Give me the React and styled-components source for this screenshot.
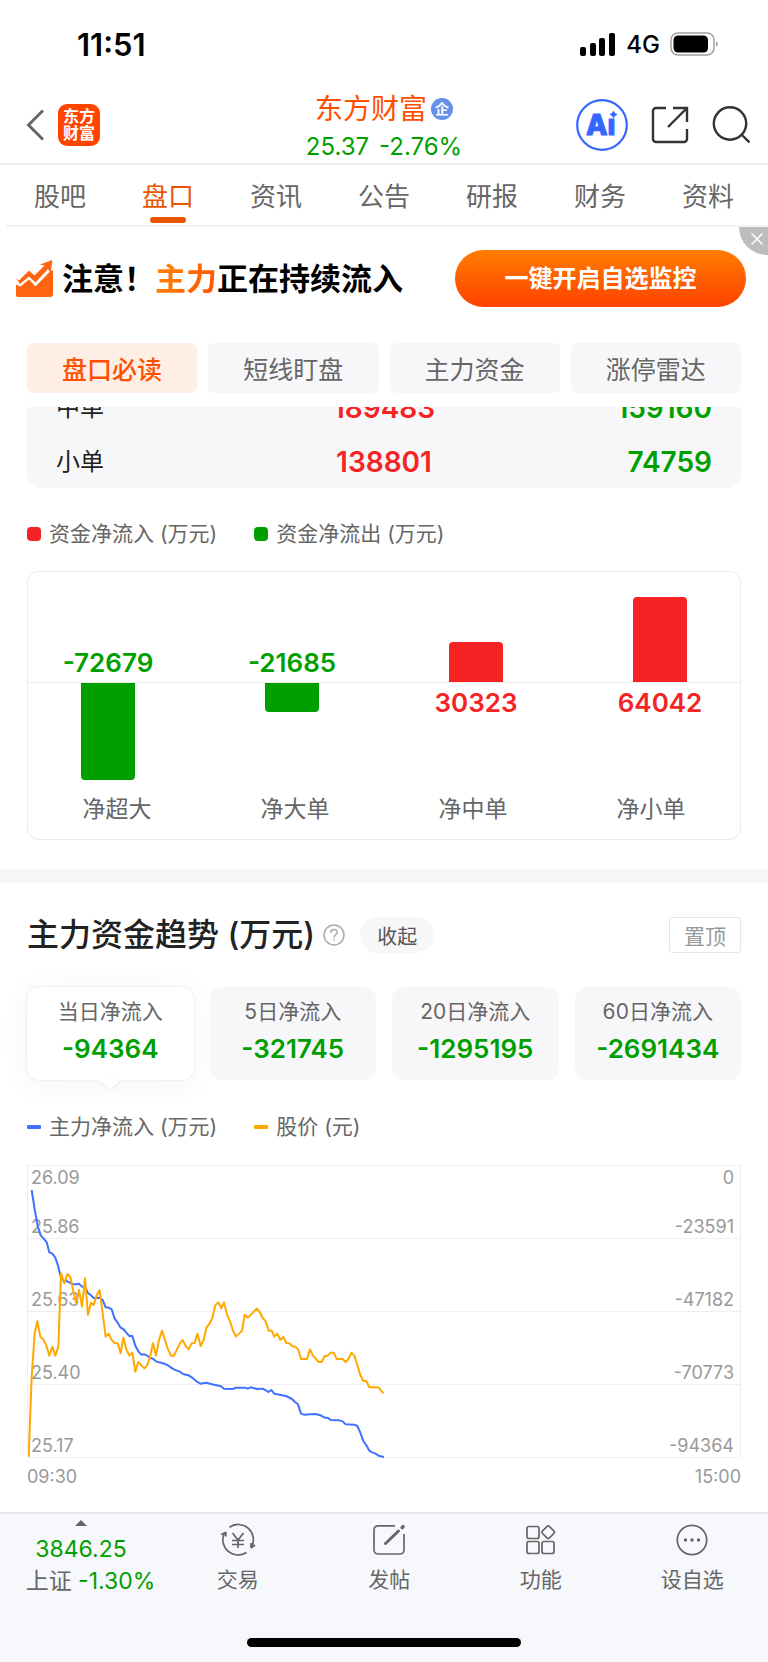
import React from "react";
import styled, { createGlobalStyle, css } from "styled-components";

const RED = "#f52323";
const GREEN = "#009f00";
const ORANGE = "#ff5000";
const GREY = "#666";
const PANEL = "#f7f7fa";

const GlobalStyle = createGlobalStyle`
  *, *::before, *::after { box-sizing: border-box; }
  body {
    margin: 0;
    background: #fff;
    color: #222;
    font-family: Inter, "Noto Sans CJK SC", sans-serif;
    font-weight: 400;
  }
  button {
    font: inherit;
    color: inherit;
    border: 0;
    padding: 0;
    margin: 0;
    background: none;
    cursor: pointer;
    white-space: nowrap;
  }
  a { color: inherit; text-decoration: none; white-space: nowrap; }
  svg { display: block; }
`;

/* ---------- status bar ---------- */
const StatusBar = styled.div`
  display: flex;
  align-items: center;
  justify-content: space-between;
  height: 86px;
  padding: 2px 49px 0 77px;
  color: #000;
`;
const Clock = styled.span`
  font-size: 31px;
  font-weight: 600;
`;
const StatusIcons = styled.div`
  display: flex;
  align-items: center;
  gap: 10px;
  font-size: 24px;
  font-weight: 500;
`;

/* ---------- header ---------- */
const Header = styled.header`
  display: grid;
  grid-template-columns: 1fr auto 1fr;
  align-items: center;
  height: 79px;
  padding: 0 18px;
  border-bottom: 2px solid #ededed;
`;
const HeaderSide = styled.div`
  display: flex;
  align-items: center;
  gap: ${(p) => p.$gap}px;
  justify-content: ${(p) => (p.$end ? "flex-end" : "flex-start")};
  padding-left: 8px;
`;
const AppLogo = styled.span`
  width: 42px;
  height: 42px;
  border-radius: 9px;
  background: #ff4400;
  color: #fff;
  font-size: 16px;
  line-height: 17px;
  font-weight: 700;
  text-align: center;
  padding-top: 4px;
`;
const StockTitle = styled.div`
  display: flex;
  flex-direction: column;
  align-items: center;
  padding-top: 2px;
`;
const StockName = styled.h1`
  display: flex;
  align-items: center;
  gap: 4px;
  margin: 0;
  color: ${ORANGE};
  font-size: 28px;
  line-height: 42px;
  font-weight: 400;
`;
const Badge = styled.span`
  width: 22px;
  height: 22px;
  border-radius: 50%;
  background: #6590ea;
  color: #fff;
  font-size: 14px;
  line-height: 21px;
  font-weight: 700;
  text-align: center;
`;
const StockPrice = styled.div`
  display: flex;
  gap: 10px;
  color: ${GREEN};
  font-size: 24px;
  line-height: 34px;
`;

/* ---------- tabs ---------- */
const Tabs = styled.nav`
  display: flex;
  height: 62px;
  margin-left: 6px;
  padding-right: 6px;
  border-bottom: 2px solid #f2f2f2;
`;
const Tab = styled.a`
  flex: 1;
  display: flex;
  flex-direction: column;
  align-items: center;
  justify-content: space-between;
  padding: 13px 0 2px;
  font-size: 26px;
  line-height: 38px;
  color: ${(p) => (p.$active ? "#ea5504" : GREY)};
  &::after {
    content: "";
    width: 36px;
    height: 6px;
    border-radius: 3px;
    background: ${(p) => (p.$active ? "#ea5504" : "transparent")};
  }
`;

/* ---------- promo banner ---------- */
const Banner = styled.section`
  position: relative;
  display: flex;
  align-items: center;
  gap: 9px;
  height: 102px;
  padding: 0 22px 0 16px;
`;
const BannerText = styled.p`
  flex: 1;
  margin: 0;
  padding-top: 2px;
  color: #000;
  font-size: 31px;
  line-height: 44px;
  font-weight: 700;
  white-space: nowrap;
`;
const Highlight = styled.span`
  background: linear-gradient(120deg, #ff8a00, #ff5000);
  background-clip: text;
  color: transparent;
`;
const BannerButton = styled.button`
  width: 291px;
  height: 57px;
  padding-bottom: 3px;
  border-radius: 29px;
  background: linear-gradient(180deg, #ff7d00, #ff4200);
  color: #fff;
  font-size: 24px;
  font-weight: 700;
`;
const CloseButton = styled.button`
  position: absolute;
  top: 0;
  right: 0;
  width: 29px;
  height: 28px;
  border-bottom-left-radius: 29px;
  background: #bdbdbd;
  display: flex;
  align-items: center;
  justify-content: center;
  padding: 0 0 5px 7px;
`;

/* ---------- content ---------- */
const Block = styled.section`
  padding: 0 27px;
`;
const Chips = styled.div`
  display: grid;
  grid-template-columns: repeat(4, 1fr);
  gap: 11px;
  padding: 14px 0;
`;
const Chip = styled.button`
  height: 50px;
  border-radius: 6px;
  font-size: 25px;
  background: ${PANEL};
  color: ${GREY};
  ${(p) =>
    p.$active &&
    css`
      background: #ffeee5;
      color: ${ORANGE};
      font-weight: 500;
    `}
`;
const TableClip = styled.div`
  display: flex;
  align-items: flex-end;
  height: 81px;
  overflow: hidden;
  border-radius: 0 0 14px 14px;
  background: ${PANEL};
`;
const OrderTable = styled.table`
  width: 100%;
  table-layout: fixed;
  border-collapse: collapse;
`;
const OrderRow = styled.tr`
  height: 54px;
`;
const OrderName = styled.th`
  padding: 2px 0 0 29px;
  font-size: 24px;
  line-height: 36px;
  font-weight: 400;
  text-align: left;
`;
const OrderValue = styled.td`
  padding: 2px ${(p) => (p.$out ? 29 : 0)}px 0 0;
  color: ${(p) => (p.$out ? GREEN : RED)};
  font-size: 28px;
  line-height: 36px;
  font-weight: 600;
  text-align: ${(p) => (p.$out ? "right" : "center")};
`;

const Legend = styled.ul`
  display: flex;
  gap: 37px;
  margin: 0;
  padding: ${(p) => (p.$line ? "32px 0 23px" : "31px 0 22px")};
  list-style: none;
  color: ${GREY};
  font-size: 21px;
  line-height: 30px;
`;
const LegendItem = styled.li`
  display: flex;
  align-items: center;
  gap: 8px;
  white-space: nowrap;
  &::before {
    content: "";
    width: 14px;
    height: ${(p) => (p.$line ? 4 : 14)}px;
    border-radius: ${(p) => (p.$line ? 1 : 4)}px;
    background: ${(p) => p.$color};
  }
`;

/* ---------- bar chart ---------- */
const BarCard = styled.div`
  border: 1px solid #ebebeb;
  border-radius: 12px;
`;
const BarHalf = styled.div`
  display: flex;
  justify-content: space-between;
  align-items: ${(p) => (p.$top ? "flex-end" : "flex-start")};
  height: ${(p) => (p.$top ? 111 : 109)}px;
  padding: 0 53px;
  ${(p) =>
    p.$top &&
    css`
      border-bottom: 1px solid #ebebeb;
    `}
`;
const BarCell = styled.div`
  display: flex;
  justify-content: center;
  width: 54px;
`;
const Bar = styled.div`
  width: 54px;
  background: ${(p) => (p.$up ? RED : GREEN)};
  border-radius: ${(p) => (p.$up ? "4px 4px 0 0" : "0 0 4px 4px")};
`;
const BarValue = styled.span`
  color: ${(p) => (p.$up ? RED : GREEN)};
  font-size: 26px;
  line-height: 39px;
  font-weight: 600;
`;
const BarNames = styled.div`
  display: grid;
  grid-template-columns: repeat(4, 1fr);
  padding-bottom: 13px;
  color: ${GREY};
  font-size: 23px;
  line-height: 34px;
  text-align: center;
`;
const Divider = styled.div`
  height: 14px;
  margin-top: 29px;
  background: ${PANEL};
`;

/* ---------- trend ---------- */
const TrendHead = styled.div`
  display: flex;
  align-items: center;
  padding: 30px 0;
`;
const TrendTitle = styled.h2`
  margin: 0;
  font-size: 32px;
  line-height: 44px;
  font-weight: 500;
  white-space: nowrap;
`;
const HelpButton = styled.button`
  margin: 0 15px 0 8px;
`;
const Pill = styled.button`
  width: 74px;
  height: 36px;
  border-radius: 18px;
  background: ${PANEL};
  color: #555;
  font-size: 20px;
`;
const PinButton = styled.button`
  width: 72px;
  height: 36px;
  margin-left: auto;
  border: 1px solid #e6e6e6;
  border-radius: 3px;
  color: #999;
  font-size: 21px;
`;
const FlowCards = styled.div`
  display: grid;
  grid-template-columns: repeat(4, 1fr);
  gap: 16px;
`;
const FlowCard = styled.button`
  position: relative;
  display: flex;
  flex-direction: column;
  align-items: center;
  height: 93px;
  padding-top: 8px;
  border-radius: 12px;
  background: ${PANEL};
  ${(p) =>
    p.$active &&
    css`
      background: #fff;
      box-shadow: 0 0 2px rgba(0, 0, 0, 0.12), 0 4px 30px rgba(0, 0, 0, 0.05);
      &::after {
        content: "";
        position: absolute;
        top: 100%;
        left: 50%;
        margin-left: -11px;
        border: 11px solid transparent;
        border-top: 9px solid #fff;
        border-bottom: 0;
        filter: drop-shadow(0 1px 1px rgba(0, 0, 0, 0.08));
      }
    `}
`;
const FlowLabel = styled.span`
  color: ${GREY};
  font-size: 21px;
  line-height: 33px;
`;
const FlowValue = styled.span`
  color: ${GREEN};
  font-size: 26px;
  line-height: 41px;
  font-weight: 600;
`;
const LineChart = styled.div`
  position: relative;
  border: 1px solid #efefef;
  border-bottom: 0;
  color: #999;
  font-size: 18px;
  line-height: 22px;
`;
const ChartBand = styled.div`
  display: flex;
  flex-direction: column;
  justify-content: space-between;
  height: 73px;
  padding: 1px 6px 0 3px;
  border-bottom: 1px solid #efefef;
  &:not(:first-child) {
    justify-content: flex-end;
  }
`;
const ScalePair = styled.div`
  display: flex;
  justify-content: space-between;
`;
const Plot = styled.svg`
  position: absolute;
  inset: 0;
  width: 100%;
  height: 100%;
`;
const Series = styled.polyline`
  fill: none;
  stroke-width: 2px;
  stroke-linejoin: round;
  vector-effect: non-scaling-stroke;
`;
const TimeAxis = styled.div`
  display: flex;
  justify-content: space-between;
  padding: 8px 0 24px;
  color: #999;
  font-size: 18px;
  line-height: 22px;
`;

/* ---------- bottom bar ---------- */
const Footer = styled.footer`
  border-top: 2px solid #e4e5e7;
  background: #f7f8fb;
`;
const ActionRow = styled.div`
  display: flex;
  height: 124px;
`;
const IndexButton = styled.button`
  width: 162px;
  display: flex;
  flex-direction: column;
  align-items: center;
  padding-top: 6px;
  color: ${GREEN};
  font-size: 23px;
  line-height: 32px;
`;
const IndexValue = styled.span`
  padding-top: 7px;
`;
const IndexChange = styled.span`
  padding-left: 19px;
`;
const IndexName = styled.span`
  color: ${GREY};
`;
const Action = styled.button`
  flex: 1;
  display: flex;
  flex-direction: column;
  align-items: center;
  gap: 7px;
  padding-top: 9px;
  color: ${GREY};
  font-size: 21px;
  line-height: 31px;
`;
const HomeIndicator = styled.div`
  width: 274px;
  height: 9px;
  margin: 0 auto;
  border-radius: 5px;
  background: #000;
`;
const HomeArea = styled.div`
  height: 24px;
`;

/* ---------- icons ---------- */
const SignalIcon = () => (
  <svg width="36" height="23" viewBox="0 0 36 23" fill="#000" aria-hidden="true">
    <rect x="0" y="14" width="6" height="9" rx="2" />
    <rect x="10" y="10" width="6" height="13" rx="2" />
    <rect x="19" y="5" width="6" height="18" rx="2" />
    <rect x="29" y="0" width="6" height="23" rx="2" />
  </svg>
);
const BatteryIcon = () => (
  <svg width="49" height="24" viewBox="0 0 49 24" aria-hidden="true">
    <rect x="1" y="1" width="43" height="22" rx="7" fill="none" stroke="#a0a0a0" strokeWidth="1.5" />
    <rect x="3.500" y="3.500" width="34.500" height="17" rx="4.500" fill="#000" />
    <path d="M46 9.500c2.500 1 2.500 4 0 5z" fill="#a0a0a0" />
  </svg>
);
const BackIcon = () => (
  <svg width="18" height="32" viewBox="0 0 18 32" fill="none" stroke="#666" strokeWidth="3" aria-hidden="true">
    <path d="M17 1.500 2.500 16 17 30.500" />
  </svg>
);
const AiIcon = () => (
  <svg width="52" height="52" viewBox="0 0 52 52" fill="#3565ff" aria-hidden="true">
    <circle cx="26" cy="26" r="24.800" fill="none" stroke="#3565ff" strokeWidth="2.200" />
    <text x="10" y="36" fontFamily="Inter, sans-serif" fontSize="28" fontWeight="800" stroke="#3565ff" strokeWidth="1" strokeLinejoin="round">Aı</text>
    <path d="M37.500 11.500q1 3 4 4-3 1-4 4-1-3-4-4 3-1 4-4z" />
  </svg>
);
const ShareIcon = () => (
  <svg width="38" height="38" viewBox="0 0 38 38" fill="none" stroke="#333" strokeWidth="2.400" aria-hidden="true">
    <path d="M15 2H5a3 3 0 0 0-3 3v28a3 3 0 0 0 3 3h28a3 3 0 0 0 3-3V23" />
    <path d="M22 2h14v14M35.500 2.500 17 21" />
  </svg>
);
const SearchIcon = () => (
  <svg width="38" height="38" viewBox="0 0 38 38" fill="none" stroke="#333" strokeWidth="2.400" aria-hidden="true">
    <circle cx="18" cy="17.500" r="16.200" />
    <path d="m29 28 8.500 8.500" />
  </svg>
);
const TrendIcon = () => (
  <svg width="37" height="37" viewBox="0 0 37 37" fill="#ff6410" aria-hidden="true">
    <path d="M0 18 3 20.500 13 10.500 18.500 15.500 28.500 5.500 24 4.500 36.500 0 34.500 13 32 9 19.500 22.500 13 16.500 4 24z" />
    <path d="M0 24.500 4.500 26.500 13 19.500 19.500 26.500 35 10.500h2V34a3 3 0 0 1-3 3H2a2 2 0 0 1-2-2z" />
  </svg>
);
const CloseIcon = () => (
  <svg width="12" height="12" viewBox="0 0 12 12" stroke="#fff" strokeWidth="1.500" aria-hidden="true">
    <path d="m.5.500 11 11M11.500.500l-11 11" />
  </svg>
);
const HelpIcon = () => (
  <svg width="22" height="22" viewBox="0 0 22 22" fill="none" stroke="#aaa" strokeWidth="1.500" aria-hidden="true">
    <circle cx="11" cy="11" r="10" />
    <path d="M7.800 8.800c0-4.300 6.500-4.300 6.500-.6 0 2.300-3.200 2.400-3.200 5.200M11.100 14.800v1.800" />
  </svg>
);
const UpIcon = () => (
  <svg width="12" height="6" viewBox="0 0 12 6" fill="#666" aria-hidden="true">
    <path d="m6 0 6 6H0z" />
  </svg>
);
const actionIcon = {
  width: 36,
  height: 34,
  viewBox: "0 0 36 34",
  fill: "none",
  stroke: "#666",
  strokeWidth: 1.7,
  "aria-hidden": true,
};
const TradeIcon = () => (
  <svg {...actionIcon}>
    <path d="M9.500 4.200A15.200 15.200 0 0 1 31.500 24M26.500 29.500A15.200 15.200 0 0 1 4.500 10" />
    <path d="M31 25l4-3M1 11.500l4.800-2v4M31 20v5" />
    <path d="m12.500 10 5.500 7 5.500-7M18 17v8M12 17.500h12M12 21.500h12" />
  </svg>
);
const PostIcon = () => (
  <svg {...actionIcon}>
    <path d="M24 2.800H7a4 4 0 0 0-4 4V27a4 4 0 0 0 4 4h22a4 4 0 0 0 4-4V11" />
    <path d="M14.500 20.500 27.500 8" strokeWidth="3" strokeLinecap="round" />
    <path d="m31.200 4.500.8-.8" strokeWidth="3.500" strokeLinecap="round" />
  </svg>
);
const ToolsIcon = () => (
  <svg {...actionIcon}>
    <rect x="4" y="3.500" width="12" height="12" rx="2" />
    <rect x="4" y="18.500" width="12" height="12" rx="2" />
    <rect x="19" y="18.500" width="12" height="12" rx="2" />
    <rect x="20.300" y="4.300" width="9.800" height="9.800" rx="1.500" transform="rotate(45 25.200 9.200)" />
  </svg>
);
const MoreIcon = () => (
  <svg {...actionIcon}>
    <circle cx="18" cy="17" r="14.700" />
    <g fill="#666" stroke="none">
      <circle cx="11.500" cy="17" r="1.700" />
      <circle cx="18" cy="17" r="1.700" />
      <circle cx="24.500" cy="17" r="1.700" />
    </g>
  </svg>
);

/* ---------- data ---------- */
const tabs = ["股吧", "盘口", "资讯", "公告", "研报", "财务", "资料"];
const chips = ["盘口必读", "短线盯盘", "主力资金", "涨停雷达"];
const orders = [
  { name: "中单", inflow: 189483, outflow: 159160 },
  { name: "小单", inflow: 138801, outflow: 74759 },
];
const netFlows = [
  { name: "净超大", value: -72679 },
  { name: "净大单", value: -21685 },
  { name: "净中单", value: 30323 },
  { name: "净小单", value: 64042 },
];
const PX_PER_UNIT = 97 / 72679;
const flows = [
  { label: "当日净流入", value: "-94364" },
  { label: "5日净流入", value: "-321745" },
  { label: "20日净流入", value: "-1295195" },
  { label: "60日净流入", value: "-2691434" },
];
const scale = [
  [["26.09", "0"], ["25.86", "-23591"]],
  [["25.63", "-47182"]],
  [["25.40", "-70773"]],
  [["25.17", "-94364"]],
];
const inflowPoints =
  "95,120 104,178 113,228 122,256 131,266 140,277 148,307 157,311 166,323 175,350 184,388 193,393 202,394 211,399 220,403 228,403 237,401 246,410 255,411 264,429 273,436 281,444 290,444 299,443 308,450 317,472 326,473 335,478 344,506 353,518 362,533 370,537 379,548 388,558 397,558 406,587 415,604 424,614 433,613 442,617 451,624 459,626 468,634 477,637 486,639 495,642 504,646 513,653 522,658 531,662 540,665 549,672 558,674 566,676 575,682 584,689 593,696 601,701 618,698 636,703 663,709 672,716 699,717 708,713 735,713 743,716 752,712 770,717 787,716 796,720 805,726 814,720 823,731 858,738 876,747 885,756 894,763 903,791 912,794 945,792 962,796 974,803 983,803 992,810 1018,811 1028,814 1037,823 1063,824 1072,828 1081,848 1090,873 1099,886 1108,902 1116,907 1125,910 1136,917 1152,921";
const pricePoints =
  "86,920 95,680 104,550 112,514 121,560 130,569 139,587 148,617 157,590 166,617 175,590 183,370 193,400 202,372 211,381 220,425 229,460 237,420 246,470 255,385 264,495 273,458 281,465 290,436 299,420 308,490 317,560 326,551 335,570 344,579 353,580 362,610 370,563 379,598 388,617 397,608 406,665 415,636 424,646 433,655 442,646 451,617 459,580 468,617 477,570 486,542 495,570 504,598 513,617 522,617 531,598 540,580 548,570 557,588 566,598 575,580 584,579 592,551 602,588 611,570 619,533 628,522 637,504 646,466 655,457 664,475 672,457 681,494 690,514 699,542 708,560 726,542 734,494 744,503 770,476 779,486 788,504 797,514 806,542 815,542 823,560 832,551 841,570 850,561 859,579 868,580 877,589 886,590 895,599 903,627 921,627 930,598 939,617 956,636 965,636 974,618 983,617 992,608 1001,608 1010,627 1028,627 1037,636 1046,626 1054,608 1063,617 1072,645 1081,675 1090,693 1099,693 1108,712 1135,712 1151,730";
const actions = [
  { label: "交易", Icon: TradeIcon },
  { label: "发帖", Icon: PostIcon },
  { label: "功能", Icon: ToolsIcon },
  { label: "设自选", Icon: MoreIcon },
];

/* One half of the bar chart: bars on their own side of zero, values on the other. */
const FlowHalf = ({ top }) => (
  <BarHalf $top={top}>
    {netFlows.map(({ name, value }) => {
      const up = value > 0;
      return (
        <BarCell key={name}>
          {up === top ? (
            <Bar $up={up} style={{ height: Math.round(Math.abs(value) * PX_PER_UNIT) }} />
          ) : (
            <BarValue $up={up}>{value}</BarValue>
          )}
        </BarCell>
      );
    })}
  </BarHalf>
);

export default function App() {
  return (
    <>
      <GlobalStyle />
      <StatusBar>
        <Clock>11:51</Clock>
        <StatusIcons>
          <SignalIcon />
          <span>4G</span>
          <BatteryIcon />
        </StatusIcons>
      </StatusBar>

      <Header>
        <HeaderSide $gap={14}>
          <button aria-label="返回"><BackIcon /></button>
          <AppLogo>东方<br />财富</AppLogo>
        </HeaderSide>
        <StockTitle>
          <StockName>东方财富<Badge>企</Badge></StockName>
          <StockPrice><span>25.37</span><span>-2.76%</span></StockPrice>
        </StockTitle>
        <HeaderSide $gap={23} $end>
          <button aria-label="Ai"><AiIcon /></button>
          <button aria-label="分享"><ShareIcon /></button>
          <button aria-label="搜索"><SearchIcon /></button>
        </HeaderSide>
      </Header>

      <Tabs>
        {tabs.map((name) => (
          <Tab key={name} href="#" $active={name === "盘口"}>{name}</Tab>
        ))}
      </Tabs>

      <Banner>
        <TrendIcon />
        <BannerText>注意！<Highlight>主力</Highlight>正在持续流入</BannerText>
        <BannerButton>一键开启自选监控</BannerButton>
        <CloseButton aria-label="关闭"><CloseIcon /></CloseButton>
      </Banner>

      <Block>
        <Chips>
          {chips.map((name, i) => (
            <Chip key={name} $active={i === 0}>{name}</Chip>
          ))}
        </Chips>
        <TableClip>
          <OrderTable>
            <tbody>
              {orders.map((o) => (
                <OrderRow key={o.name}>
                  <OrderName scope="row">{o.name}</OrderName>
                  <OrderValue>{o.inflow}</OrderValue>
                  <OrderValue $out>{o.outflow}</OrderValue>
                </OrderRow>
              ))}
            </tbody>
          </OrderTable>
        </TableClip>
        <Legend>
          <LegendItem $color={RED}>资金净流入 (万元)</LegendItem>
          <LegendItem $color={GREEN}>资金净流出 (万元)</LegendItem>
        </Legend>
        <BarCard>
          <FlowHalf top />
          <FlowHalf top={false} />
          <BarNames>
            {netFlows.map(({ name }) => <span key={name}>{name}</span>)}
          </BarNames>
        </BarCard>
      </Block>

      <Divider />

      <Block>
        <TrendHead>
          <TrendTitle>主力资金趋势 (万元)</TrendTitle>
          <HelpButton aria-label="说明"><HelpIcon /></HelpButton>
          <Pill>收起</Pill>
          <PinButton>置顶</PinButton>
        </TrendHead>
        <FlowCards>
          {flows.map((f, i) => (
            <FlowCard key={f.label} $active={i === 0}>
              <FlowLabel>{f.label}</FlowLabel>
              <FlowValue>{f.value}</FlowValue>
            </FlowCard>
          ))}
        </FlowCards>
        <Legend $line>
          <LegendItem $line $color="#4070ff">主力净流入 (万元)</LegendItem>
          <LegendItem $line $color="#ffa800">股价 (元)</LegendItem>
        </Legend>
        <LineChart>
          {scale.map((band) => (
            <ChartBand key={band[0][0]}>
              {band.map(([price, amount]) => (
                <ScalePair key={price}><span>{price}</span><span>{amount}</span></ScalePair>
              ))}
            </ChartBand>
          ))}
          <Plot viewBox="84 48 2136 876" preserveAspectRatio="none" aria-hidden="true">
            <Series points={inflowPoints} stroke="#4070ff" />
            <Series points={pricePoints} stroke="#ffa800" />
          </Plot>
        </LineChart>
        <TimeAxis><span>09:30</span><span>15:00</span></TimeAxis>
      </Block>

      <Footer>
        <ActionRow>
          <IndexButton>
            <UpIcon />
            <IndexValue>3846.25</IndexValue>
            <IndexChange><IndexName>上证</IndexName> -1.30%</IndexChange>
          </IndexButton>
          {actions.map(({ label, Icon }) => (
            <Action key={label}><Icon />{label}</Action>
          ))}
        </ActionRow>
        <HomeArea><HomeIndicator /></HomeArea>
      </Footer>
    </>
  );
}
